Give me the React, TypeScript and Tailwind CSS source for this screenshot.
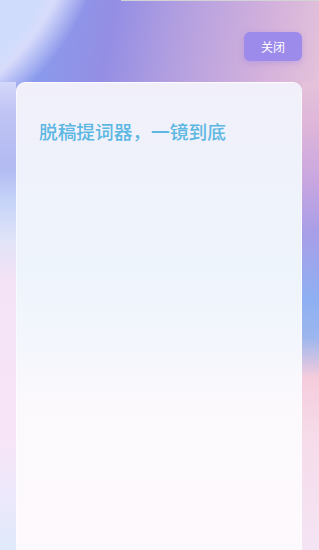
export default function App() {
  return (
    <div
      className="flex h-[550px] w-full flex-col overflow-hidden [background:linear-gradient(to_bottom,#d4d8fa_0px,#c0c4f4_30px,#b2baf2_85px,#c6d4f8_120px,#e2e4f8_160px,#f4e2f6_200px,#f7e4f7_360px,#ede8fb_410px,#dfeafa_468px)_left_0px_top_82px/16px_468px_no-repeat,linear-gradient(to_bottom,#e6c2da_0px,#dcb4da_50px,#c8a6e0_100px,#a89ee8_150px,#8eb0f2_218px,#9cb6ee_255px,#f5ccdc_296px,#f6dcea_358px,#f4e4f4_468px)_right_0px_top_82px/17px_468px_no-repeat,radial-gradient(circle_at_-150px_-100px,#cfdcfc_0px,#cfdcfc_214px,#d8dcfb_228px,rgba(175,170,242,0)_258px),linear-gradient(100deg,#8a9aec_12%,#948ee4_28%,#b4a0e0_45%,#d2b0dc_65%,#e6c4da_82%,#efd6dc_100%)]"
      style={{ fontFamily: '"Noto Sans CJK SC", "Noto Sans", sans-serif' }}
    >
      <div className="ml-[121px] h-px bg-[#d3d3d6]" />
      <div className="flex justify-end pr-[17px] pt-[31px]">
        <button className="h-[29px] w-[58px] rounded-md bg-[#9d8beb] text-[12px] text-white shadow-[0_2px_6px_rgba(140,120,220,0.35)]">
          关闭
        </button>
      </div>
      <div className="mt-[21px] ml-4 mr-[17px] flex-1 rounded-t-[9px] border border-white/50 bg-[linear-gradient(to_bottom,#f1f0fa_0%,#eff2fb_20%,#eef4fc_40%,#f3f6fd_55%,#fcf9fc_70%,#fdf9fd_100%)] px-[22px] pt-[36px]">
        <h1 className="text-[18.7px] font-medium leading-[24px] text-[#5cb8e2]">
          脱稿提词器，一镜到底
        </h1>
      </div>
    </div>
  )
}
